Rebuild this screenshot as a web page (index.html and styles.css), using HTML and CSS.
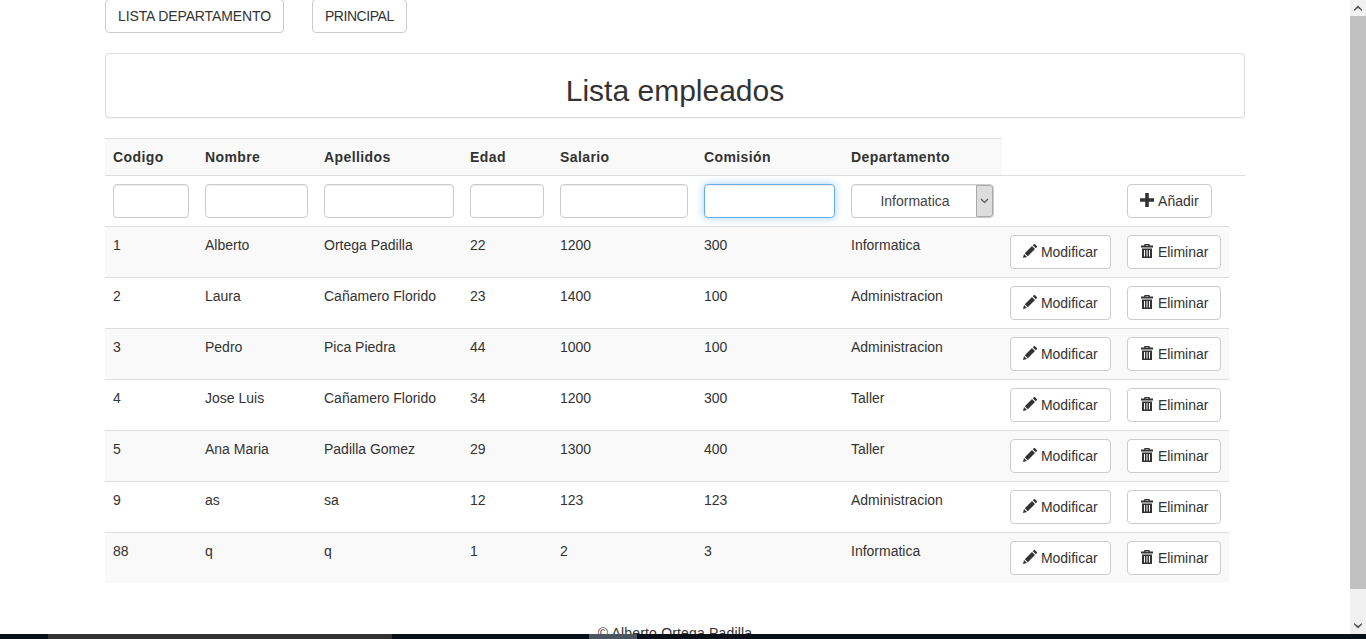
FILE: index.html
```html
<!DOCTYPE html>
<html lang="es">
<head>
    <meta charset="UTF-8">
    <title>Lista empleados</title>
    <link rel="stylesheet" href="styles.css">
</head>
<body>
    <div class="window">
        <div class="page">
            <div class="container">
                <div class="top-links">
                    <button class="btn btn-list" type="button">LISTA DEPARTAMENTO</button>
                    <button class="btn btn-main" type="button">PRINCIPAL</button>
                </div>

                <div class="panel">
                    <h1>Lista empleados</h1>
                </div>

                <table class="employees">
                    <colgroup>
                        <col class="c-code">
                        <col class="c-name">
                        <col class="c-surname">
                        <col class="c-age">
                        <col class="c-salary">
                        <col class="c-fee">
                        <col class="c-dept">
                        <col class="c-edit">
                        <col class="c-del">
                        <col class="c-rest">
                    </colgroup>
                    <thead>
                        <tr class="head-row">
                            <th>Codigo</th>
                            <th>Nombre</th>
                            <th>Apellidos</th>
                            <th>Edad</th>
                            <th>Salario</th>
                            <th>Comisión</th>
                            <th>Departamento</th>
                        </tr>
                        <tr>
                            <td><input class="field" type="text"></td>
                            <td><input class="field" type="text"></td>
                            <td><input class="field" type="text"></td>
                            <td><input class="field" type="text"></td>
                            <td><input class="field" type="text"></td>
                            <td><input class="field field-focus" type="text"></td>
                            <td>
                                <div class="select-wrap">
                                    <select class="field select">
                                        <option>Informatica</option>
                                        <option>Administracion</option>
                                        <option>Taller</option>
                                    </select>
                                    <span class="select-arrow">
                                        <svg width="9" height="6" viewBox="0 0 9 6"><path d="M1 1l3.500 3.500L8 1" fill="none" stroke="#555" stroke-width="1.2"/></svg>
                                    </span>
                                </div>
                            </td>
                            <td></td>
                            <td>
                                <button class="btn" type="button"><svg class="icon icon-plus" viewBox="0 0 14 14"><path d="M5.200 0h3.600v5.200H14v3.600H8.800V14H5.200V8.800H0V5.200h5.200z"/></svg> Añadir</button>
                            </td>
                            <td></td>
                        </tr>
                    </thead>
                    <tbody>
                        <tr>
                            <td>1</td><td>Alberto</td><td>Ortega Padilla</td><td>22</td><td>1200</td><td>300</td><td>Informatica</td>
                            <td><button class="btn" type="button"><svg class="icon" viewBox="0 0 14 14"><path d="M0 14l1-4 3 3zM1.800 9.200L9 2l3 3-7.200 7.200zM9.800 1.200L11 0q.4-.3.8 0l2.200 2.200q.3.4 0 .8L12.800 4.200z"/></svg> Modificar</button></td>
                            <td><button class="btn" type="button"><svg class="icon" viewBox="0 0 14 14"><path fill-rule="evenodd" d="M4.500 0h5l.5 1.500h3V3.500H1V1.500h3zM5.500 1v.5h3V1zM2 4.500h10V14H2zM4 6v6.500h1V6zM6.500 6v6.500h1V6zM9 6v6.500h1V6z"/></svg> Eliminar</button></td>
                        </tr>
                        <tr>
                            <td>2</td><td>Laura</td><td>Cañamero Florido</td><td>23</td><td>1400</td><td>100</td><td>Administracion</td>
                            <td><button class="btn" type="button"><svg class="icon" viewBox="0 0 14 14"><path d="M0 14l1-4 3 3zM1.800 9.200L9 2l3 3-7.200 7.200zM9.800 1.200L11 0q.4-.3.8 0l2.200 2.200q.3.4 0 .8L12.800 4.200z"/></svg> Modificar</button></td>
                            <td><button class="btn" type="button"><svg class="icon" viewBox="0 0 14 14"><path fill-rule="evenodd" d="M4.500 0h5l.5 1.500h3V3.500H1V1.500h3zM5.500 1v.5h3V1zM2 4.500h10V14H2zM4 6v6.500h1V6zM6.500 6v6.500h1V6zM9 6v6.500h1V6z"/></svg> Eliminar</button></td>
                        </tr>
                        <tr>
                            <td>3</td><td>Pedro</td><td>Pica Piedra</td><td>44</td><td>1000</td><td>100</td><td>Administracion</td>
                            <td><button class="btn" type="button"><svg class="icon" viewBox="0 0 14 14"><path d="M0 14l1-4 3 3zM1.800 9.200L9 2l3 3-7.200 7.200zM9.800 1.200L11 0q.4-.3.8 0l2.200 2.200q.3.4 0 .8L12.800 4.200z"/></svg> Modificar</button></td>
                            <td><button class="btn" type="button"><svg class="icon" viewBox="0 0 14 14"><path fill-rule="evenodd" d="M4.500 0h5l.5 1.500h3V3.500H1V1.500h3zM5.500 1v.5h3V1zM2 4.500h10V14H2zM4 6v6.500h1V6zM6.500 6v6.500h1V6zM9 6v6.500h1V6z"/></svg> Eliminar</button></td>
                        </tr>
                        <tr>
                            <td>4</td><td>Jose Luis</td><td>Cañamero Florido</td><td>34</td><td>1200</td><td>300</td><td>Taller</td>
                            <td><button class="btn" type="button"><svg class="icon" viewBox="0 0 14 14"><path d="M0 14l1-4 3 3zM1.800 9.200L9 2l3 3-7.200 7.200zM9.800 1.200L11 0q.4-.3.8 0l2.200 2.200q.3.4 0 .8L12.800 4.200z"/></svg> Modificar</button></td>
                            <td><button class="btn" type="button"><svg class="icon" viewBox="0 0 14 14"><path fill-rule="evenodd" d="M4.500 0h5l.5 1.500h3V3.500H1V1.500h3zM5.500 1v.5h3V1zM2 4.500h10V14H2zM4 6v6.500h1V6zM6.500 6v6.500h1V6zM9 6v6.500h1V6z"/></svg> Eliminar</button></td>
                        </tr>
                        <tr>
                            <td>5</td><td>Ana Maria</td><td>Padilla Gomez</td><td>29</td><td>1300</td><td>400</td><td>Taller</td>
                            <td><button class="btn" type="button"><svg class="icon" viewBox="0 0 14 14"><path d="M0 14l1-4 3 3zM1.800 9.200L9 2l3 3-7.200 7.200zM9.800 1.200L11 0q.4-.3.8 0l2.200 2.200q.3.4 0 .8L12.800 4.200z"/></svg> Modificar</button></td>
                            <td><button class="btn" type="button"><svg class="icon" viewBox="0 0 14 14"><path fill-rule="evenodd" d="M4.500 0h5l.5 1.500h3V3.500H1V1.500h3zM5.500 1v.5h3V1zM2 4.500h10V14H2zM4 6v6.500h1V6zM6.500 6v6.500h1V6zM9 6v6.500h1V6z"/></svg> Eliminar</button></td>
                        </tr>
                        <tr>
                            <td>9</td><td>as</td><td>sa</td><td>12</td><td>123</td><td>123</td><td>Administracion</td>
                            <td><button class="btn" type="button"><svg class="icon" viewBox="0 0 14 14"><path d="M0 14l1-4 3 3zM1.800 9.200L9 2l3 3-7.200 7.200zM9.800 1.200L11 0q.4-.3.8 0l2.200 2.200q.3.4 0 .8L12.800 4.200z"/></svg> Modificar</button></td>
                            <td><button class="btn" type="button"><svg class="icon" viewBox="0 0 14 14"><path fill-rule="evenodd" d="M4.500 0h5l.5 1.500h3V3.500H1V1.500h3zM5.500 1v.5h3V1zM2 4.500h10V14H2zM4 6v6.500h1V6zM6.500 6v6.500h1V6zM9 6v6.500h1V6z"/></svg> Eliminar</button></td>
                        </tr>
                        <tr>
                            <td>88</td><td>q</td><td>q</td><td>1</td><td>2</td><td>3</td><td>Informatica</td>
                            <td><button class="btn" type="button"><svg class="icon" viewBox="0 0 14 14"><path d="M0 14l1-4 3 3zM1.800 9.200L9 2l3 3-7.200 7.200zM9.800 1.200L11 0q.4-.3.8 0l2.200 2.200q.3.4 0 .8L12.800 4.200z"/></svg> Modificar</button></td>
                            <td><button class="btn" type="button"><svg class="icon" viewBox="0 0 14 14"><path fill-rule="evenodd" d="M4.500 0h5l.5 1.500h3V3.500H1V1.500h3zM5.500 1v.5h3V1zM2 4.500h10V14H2zM4 6v6.500h1V6zM6.500 6v6.500h1V6zM9 6v6.500h1V6z"/></svg> Eliminar</button></td>
                        </tr>
                    </tbody>
                </table>

                <footer class="page-footer">© Alberto Ortega Padilla</footer>
            </div>
        </div>

        <div class="scrollbar">
            <div class="scroll-arrow">
                <svg width="8" height="6" viewBox="0 0 8 6"><path d="M0 4.500L4 .5l4 4V6L4 3 0 6z" fill="#505050"/></svg>
            </div>
            <div class="scroll-thumb"></div>
            <div class="scroll-track"></div>
            <div class="scroll-arrow">
                <svg width="8" height="6" viewBox="0 0 8 6"><path d="M0 0l4 3 4-3v1.500l-4 4-4-4z" fill="#505050"/></svg>
            </div>
        </div>
    </div>

    <div class="taskbar">
        <span class="task-gap-a"></span>
        <span class="task-item"></span>
        <span class="task-gap-b"></span>
        <span class="task-active"></span>
    </div>
</body>
</html>
```

FILE: styles.css
```css
* {
    box-sizing: border-box;
}

html, body {
    height: 100%;
}

body {
    margin: 0;
    display: flex;
    flex-direction: column;
    overflow: hidden;
    font-family: "Liberation Sans", Arial, sans-serif;
    font-size: 14px;
    line-height: 20px;
    color: #333;
    background-color: #fff;
}

.window {
    flex: 1;
    min-height: 0;
    display: flex;
}

.page {
    flex: 1;
    min-width: 0;
    overflow: hidden;
}

.container {
    width: 1170px;
    margin: -1px 0 0 90px;
    padding: 0 15px;
}

/* Top links */
.top-links {
    display: flex;
    gap: 28px;
    margin-bottom: 20px;
}

.btn {
    display: inline-block;
    height: 34px;
    padding: 6px 12px;
    font-family: inherit;
    font-size: 14px;
    line-height: 20px;
    color: #333;
    background-color: #fff;
    border: 1px solid #ccc;
    border-radius: 4px;
    white-space: nowrap;
    cursor: pointer;
}

.btn-list {
    letter-spacing: -0.12px;
}

.btn-main {
    letter-spacing: -0.45px;
}

.icon {
    width: 14px;
    height: 14px;
    vertical-align: -1px;
    fill: #333;
}

.icon-plus {
    margin-right: 1px;
}

.panel {
    height: 65px;
    margin-bottom: 20px;
    background-color: #fff;
    border: 1px solid #ddd;
    border-radius: 4px;
    box-shadow: 0 1px 1px rgba(0,0,0,0.05);
}

.panel h1 {
    margin: 20px 0 0;
    font-size: 30px;
    font-weight: 500;
    line-height: 33px;
    text-align: center;
}

/* Table */
.employees {
    width: 1140px;
    table-layout: fixed;
    border-collapse: collapse;
    border-spacing: 0;
}

.c-code { width: 92px; }
.c-name { width: 119px; }
.c-surname { width: 146px; }
.c-age { width: 90px; }
.c-salary { width: 144px; }
.c-fee { width: 147px; }
.c-dept { width: 159px; }
.c-edit { width: 117px; }
.c-del { width: 110px; }
.c-rest { width: 16px; }

.employees th,
.employees td {
    padding: 8px;
    text-align: left;
    vertical-align: top;
    border-top: 1px solid #ddd;
}

.employees th {
    letter-spacing: 0.4px;
}

.head-row {
    background-color: #f9f9f9;
}

.employees tbody tr:nth-child(odd) {
    background-color: #f9f9f9;
}

.field {
    display: block;
    width: 100%;
    height: 34px;
    padding: 6px 12px;
    font-family: inherit;
    font-size: 14px;
    color: #555;
    background-color: #fff;
    border: 1px solid #ccc;
    border-radius: 4px;
    box-shadow: inset 0 1px 1px rgba(0,0,0,0.075);
    outline: none;
}

.field-focus {
    border-color: #66afe9;
    box-shadow: inset 0 1px 1px rgba(0,0,0,0.075), 0 0 8px rgba(102,175,233,0.6);
}

.select-wrap {
    position: relative;
}

.select {
    appearance: none;
    padding-right: 27px;
    color: #444;
    text-align: center;
    text-align-last: center;
}

.select-arrow {
    position: absolute;
    top: 1px;
    right: 1px;
    width: 17px;
    height: 32px;
    display: flex;
    align-items: center;
    justify-content: center;
    background-color: #ddd;
    border: 1px solid #aaa;
    border-radius: 0 3px 3px 0;
    pointer-events: none;
}

.page-footer {
    margin-top: 40px;
    text-align: center;
    letter-spacing: 0.17px;
    color: #333;
}

/* Fake browser scrollbar */
.scrollbar {
    width: 16px;
    display: flex;
    flex-direction: column;
    background-color: #f1f1f1;
}

.scroll-arrow {
    height: 16px;
    display: flex;
    align-items: center;
    justify-content: center;
}

.scroll-thumb {
    height: 573px;
    background-color: #c1c1c1;
}

.scroll-track {
    flex: 1;
}

/* Desktop taskbar cut off at the bottom of the capture */
.taskbar {
    flex: 0 0 5px;
    display: flex;
    background-color: #0a0f18;
}

.task-gap-a { width: 48px; }
.task-item { width: 344px; background-color: #333; }
.task-gap-b { width: 197px; }
.task-active { width: 48px; background-color: #4a5560; }
```
